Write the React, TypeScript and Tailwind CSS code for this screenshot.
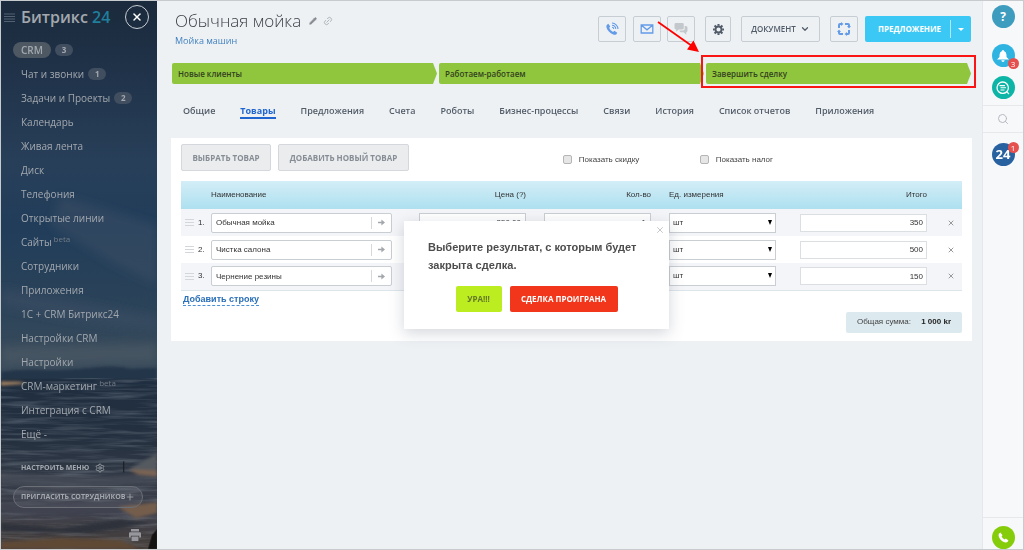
import React from 'react';
import { clsx } from 'clsx';
import { ChevronDown, Link2, Pencil, Plus, Search, Settings, X } from 'lucide-react';

interface MenuItem {
  name: string;
  count?: number;
  beta?: boolean;
  active?: boolean;
}

const menuItems: MenuItem[] = [
  { name: 'CRM', count: 3, active: true },
  { name: 'Чат и звонки', count: 1 },
  { name: 'Задачи и Проекты', count: 2 },
  { name: 'Календарь' },
  { name: 'Живая лента' },
  { name: 'Диск' },
  { name: 'Телефония' },
  { name: 'Открытые линии' },
  { name: 'Сайты', beta: true },
  { name: 'Сотрудники' },
  { name: 'Приложения' },
  { name: '1C + CRM Битрикс24' },
  { name: 'Настройки CRM' },
  { name: 'Настройки' },
  { name: 'CRM-маркетинг', beta: true },
  { name: 'Интеграция с CRM' },
];

const stages = ['Новые клиенты', 'Работаем-работаем', 'Завершить сделку'];

const tabs = [
  'Общие',
  'Товары',
  'Предложения',
  'Счета',
  'Роботы',
  'Бизнес-процессы',
  'Связи',
  'История',
  'Список отчетов',
  'Приложения',
];

const products = [
  { name: 'Обычная мойка', price: '350.00', qty: '1', total: '350' },
  { name: 'Чистка салона', price: '500.00', qty: '1', total: '500' },
  { name: 'Чернение резины', price: '150.00', qty: '1', total: '150' },
];

const SidebarPhoto = () => (
  <svg
    className="absolute inset-0 h-full w-full"
    viewBox="0 0 157 550"
    preserveAspectRatio="none"
    aria-hidden="true"
  >
    <defs>
      <linearGradient id="sky" x1="0" y1="0" x2="0" y2="1">
        <stop offset="0" stopColor="#1b2a3c" />
        <stop offset="0.2" stopColor="#20334a" />
        <stop offset="0.42" stopColor="#283f59" />
        <stop offset="0.6" stopColor="#213d5a" />
        <stop offset="0.8" stopColor="#2b4359" />
        <stop offset="1" stopColor="#3d4d5c" />
      </linearGradient>
      <linearGradient id="water" x1="0" y1="0" x2="0" y2="1">
        <stop offset="0" stopColor="#1f2e40" />
        <stop offset="0.35" stopColor="#24303f" />
        <stop offset="0.55" stopColor="#303845" />
        <stop offset="0.8" stopColor="#3f414c" />
        <stop offset="1" stopColor="#443c37" />
      </linearGradient>
      <filter id="soft" x="-20%" y="-50%" width="140%" height="200%">
        <feGaussianBlur stdDeviation="5" />
      </filter>
      <filter id="edge" x="-10%" y="-50%" width="120%" height="200%">
        <feGaussianBlur stdDeviation="1.5" />
      </filter>
      <filter id="waves" x="0" y="0" width="100%" height="100%">
        <feTurbulence type="fractalNoise" baseFrequency="0.02 0.28" numOctaves="3" seed="7" />
        <feColorMatrix values="0 0 0 0 0.42  0 0 0 0 0.47  0 0 0 0 0.53  1.8 0 0 0 -0.75" />
      </filter>
    </defs>
    <rect width="157" height="380" fill="url(#sky)" />
    <g filter="url(#soft)" fill="#3d5065">
      <path d="M60 195 L157 225 L157 285 L110 262 L50 225Z" opacity="0.5" />
      <path d="M0 288 L70 300 L157 318 L157 330 L60 318 L0 306Z" opacity="0.5" />
      <path d="M0 347 L157 344 L157 362 L0 364Z" fill="#4b5864" opacity="0.7" />
    </g>
    <path d="M0 372 Q20 369 42 370 T90 368 T130 369 L157 368 V382 H0Z" fill="#22344a" filter="url(#edge)" />
    <rect y="379" width="157" height="171" fill="url(#water)" />
    <rect y="379" width="157" height="171" filter="url(#waves)" opacity="0.35" />
    <g filter="url(#edge)">
      <path d="M0 382 L18 382 L26 384 L0 386Z" fill="#a5825f" />
      <path d="M0 473 L90 478 L157 474 L157 484 L60 490 L0 485Z" fill="#4a4e5a" opacity="0.7" />
      <path d="M130 469 L157 454 L157 471 L136 472Z" fill="#555a60" />
      <path d="M128 470 L157 471 L157 477 L138 475Z" fill="#7d6552" />
      <path d="M0 504 L70 506 L140 500 L120 514 L40 516 L0 512Z" fill="#3f434f" />
      <path d="M118 508 L157 503 L157 514 L136 519Z" fill="#755d4b" />
      <path d="M0 524 L60 529 L120 520 L150 524 L90 534 L0 532Z" fill="#2d313a" />
      <path d="M0 543 L60 539 L120 541 L140 550 L0 550Z" fill="#5e4836" />
    </g>
    <path d="M148 550 L152 536 L157 530 L157 550Z" fill="#141311" />
    <rect x="123" y="462" width="1" height="11" fill="#191c20" />
  </svg>
);

const Sidebar = () => (
  <aside className="relative flex w-[156px] shrink-0 flex-col overflow-hidden bg-[#1f3047] text-[10px] text-[#a3a8ae]">
    <SidebarPhoto />
    <div className="relative flex h-8 items-center pl-[3px]">
      <button aria-label="Меню" className="mr-1.5">
        <svg viewBox="0 0 11 9" className="h-[9px] w-[11px]" stroke="#536173" aria-hidden="true">
          <path d="M0 1 H11 M0 3.5 H11 M0 6 H11 M0 8.5 H11" />
        </svg>
      </button>
      <a href="#" className="text-[16px] leading-6 font-semibold whitespace-nowrap">
        Битрикс <span className="text-[#1f7f9d]">24</span>
      </a>
      <button
        aria-label="Закрыть"
        className="mr-2 ml-auto flex h-6 w-6 items-center justify-center rounded-full border border-[#c9ced4] text-white"
      >
        <X className="h-3 w-3" strokeWidth={3} />
      </button>
    </div>

    <nav className="relative mt-[5px] pl-3">
      {menuItems.map((item) => (
        <a key={item.name} href="#" className="flex h-6 items-center whitespace-nowrap">
          <span
            className={clsx('px-2 leading-4', item.active && 'rounded-full bg-[#4d5863] font-semibold')}
          >
            {item.name}
            {item.beta && <sup className="ml-0.5 text-[8px] text-[#737b84]">beta</sup>}
          </span>
          {item.count && (
            <span
              className={clsx(
                'h-3 w-[18px] rounded-full bg-[#414e5f] text-center text-[8px] leading-3 font-bold',
                item.active ? 'ml-1' : '-ml-1'
              )}
            >
              {item.count}
            </span>
          )}
        </a>
      ))}
      <button className="flex h-6 items-center px-2">Ещё -</button>
    </nav>

    <div className="relative mt-2.5 pl-3">
      <button className="flex h-6 items-center gap-1.5 px-2 text-[7px] font-bold whitespace-nowrap">
        НАСТРОИТЬ МЕНЮ <Settings className="h-2.5 w-2.5" />
      </button>
      <button className="mt-1.5 flex h-[22px] w-[130px] items-center justify-between rounded-full border border-[#6b6f76] bg-white/5 px-[7px] text-[7px] font-bold whitespace-nowrap">
        ПРИГЛАСИТЬ СОТРУДНИКОВ <Plus className="h-2.5 w-2.5 shrink-0" />
      </button>
    </div>
    <button aria-label="Печать" className="relative mt-auto mr-4 mb-2 self-end">
      <svg viewBox="0 0 12 12" className="h-3 w-3" fill="#96989d" aria-hidden="true">
        <path d="M2 0 H10 V2.5 H2Z M1 3.3 H11 Q12 3.3 12 4.3 V8.5 H10.2 V6.8 H1.8 V8.5 H0 V4.3 Q0 3.3 1 3.3Z M2.6 7.6 H9.4 V12 H2.6Z" />
      </svg>
    </button>
  </aside>
);

const toolButton = 'flex h-[26px] shrink-0 items-center justify-center rounded-xs border border-[#c6cdd3]';

const Header = () => (
  <header className="flex pt-3.5 pr-[11px] pl-[18px]">
    <div className="min-w-0 flex-1">
      <div className="-mt-1.5 flex items-center">
        <h1 className="text-[17px] leading-6 font-light whitespace-nowrap text-[#3d4148]">Обычная мойка</h1>
        <button aria-label="Изменить" className="ml-2 text-[#888d93]">
          <Pencil className="h-2 w-2" fill="currentColor" />
        </button>
        <button aria-label="Ссылка" className="ml-1.5 text-[#a8adb3]">
          <Link2 className="h-2.5 w-2.5 -rotate-45" />
        </button>
      </div>
      <a href="#" className="block text-[9px] leading-4 text-[#4281c0]">
        Мойка машин
      </a>
    </div>
    <div className="mt-px flex">
      <button aria-label="Позвонить" className={clsx(toolButton, 'w-7 text-[#649be8]')}>
        <svg viewBox="0 0 16 16" className="h-3.5 w-3.5" fill="none" stroke="currentColor">
          <path
            d="M3.8 2 L6 5.2 L4.8 6.7 C5.6 8.8 7.1 10.4 9.2 11.3 L10.7 10 L14 12.2 C13 14.6 11.5 15.1 9.4 14.3 C5.4 12.7 2.8 9.9 1.7 6.4 C1.2 4.3 2 2.8 3.8 2Z"
            fill="currentColor"
            stroke="none"
          />
          <path d="M8 1.2 A7 7 0 0 1 14.8 8 M8 3.7 A4.5 4.5 0 0 1 12.3 8 M8 6 A2 2 0 0 1 10 8" strokeWidth="1.2" />
        </svg>
      </button>
      <button aria-label="Письмо" className={clsx(toolButton, 'ml-[7px] w-7 text-[#649be8]')}>
        <svg viewBox="0 0 14 10" className="h-2.5 w-3.5" fill="none" stroke="currentColor" strokeWidth="1.3">
          <path d="M1.2 1 H12.8 V9 H1.2Z M1.2 1 L7 5.8 L12.8 1" />
        </svg>
      </button>
      <button aria-label="Чат" className={clsx(toolButton, 'ml-1.5 w-7 text-[#c3c8cc]')}>
        <svg viewBox="0 0 14 13" className="h-3 w-3.5" fill="currentColor">
          <path d="M1.5 0 H8.5 Q10 0 10 1.5 V5.5 Q10 7 8.5 7 H4.5 L1.8 9.4 V7 Q0 7 0 5.5 V1.5 Q0 0 1.5 0Z" />
          <path d="M11 3.2 H12.4 Q14 3.4 14 5 V8.5 Q14 10 12.7 10 V12.6 L9.8 10 H6.8 Q5.6 9.8 5.2 8.2 H9 Q11 8.2 11 6Z" />
        </svg>
      </button>
      <button aria-label="Настройки" className={clsx(toolButton, 'ml-2.5 w-[26px] text-[#525c69]')}>
        <svg viewBox="0 0 24 24" className="h-[11px] w-[11px]" fill="none" stroke="currentColor">
          <circle cx="12" cy="12" r="6.5" strokeWidth="4" />
          <path
            d="M12 0 V4 M12 20 V24 M0 12 H4 M20 12 H24 M3.5 3.5 L6.5 6.5 M17.5 17.5 L20.5 20.5 M20.5 3.5 L17.5 6.5 M6.5 17.5 L3.5 20.5"
            strokeWidth="4.5"
          />
        </svg>
      </button>
      <button className={clsx(toolButton, 'ml-2.5 w-[79px] gap-1 text-[8px] font-semibold text-[#525c69]')}>
        ДОКУМЕНТ <ChevronDown className="h-2.5 w-2.5" strokeWidth={3} />
      </button>
      <button aria-label="Развернуть" className={clsx(toolButton, 'ml-2.5 w-7 text-[#649be8]')}>
        <svg viewBox="0 0 14 14" className="h-3.5 w-3.5" fill="currentColor">
          <path d="M1 6 V3 Q1 1 3 1 H4 V3 H3 V6Z M4 0 L6.5 2 L4 4Z" />
          <path d="M8 1 H11 Q13 1 13 3 V4 H11 V3 H8Z M14 4 L12 6.5 L10 4Z" />
          <path d="M13 8 V11 Q13 13 11 13 H10 V11 H11 V8Z M10 14 L7.5 12 L10 10Z" />
          <path d="M6 13 H3 Q1 13 1 11 V10 H3 V11 H6Z M0 10 L2 7.5 L4 10Z" />
        </svg>
      </button>
      <div className="ml-[7px] flex h-[26px] w-[106px] items-center rounded-xs bg-[#3bc8f5] text-white">
        <button className="h-full flex-1 pl-1 text-[8px] font-bold">ПРЕДЛОЖЕНИЕ</button>
        <button
          aria-label="Ещё"
          className="flex h-[18px] w-[21px] items-center justify-center border-l border-white/60"
        >
          <svg viewBox="0 0 6 3" className="h-[3px] w-1.5" fill="currentColor">
            <path d="M0 0 H6 L3 3Z" />
          </svg>
        </button>
      </div>
    </div>
  </header>
);

const StageBar = () => (
  <div className="mt-3.5 flex gap-0.5 pr-[11px] pl-[15px]">
    {stages.map((stage, index) => (
      <div key={stage} className="relative flex-1">
        <button className="block h-[21px] w-full rounded-l-xs bg-[#8fc63d] px-1.5 text-left text-[8px] font-semibold text-[#34411f] [clip-path:polygon(0_0,calc(100%-4px)_0,100%_50%,calc(100%-4px)_100%,0_100%)]">
          {stage}
        </button>
        {index === stages.length - 1 && (
          <div className="pointer-events-none absolute -inset-x-[5px] -top-2 -bottom-1 border-2 border-[#fb1414]">
            <svg
              className="absolute -top-9 -left-[47px] h-9 w-12"
              viewBox="0 0 48 36"
              fill="#ff0000"
              aria-hidden="true"
            >
              <path d="M2 1 L36 25" stroke="#ff0000" strokeWidth="1.8" />
              <path d="M43 31 L31 28.5 L37.5 19.5Z" />
            </svg>
          </div>
        )}
      </div>
    ))}
  </div>
);

const Tabs = () => (
  <nav className="mt-4 flex gap-[25px] pl-[26px] text-[9px] font-semibold whitespace-nowrap text-[#535d69]">
    {tabs.map((tab) => (
      <a
        key={tab}
        href="#"
        className={clsx(
          'h-[19px] border-b-2 leading-[22px]',
          tab === 'Товары' ? 'border-[#1f66d0] font-bold text-[#1f66d0]' : 'border-transparent'
        )}
      >
        {tab}
      </a>
    ))}
  </nav>
);

const field = 'h-5 border border-[#c9ced2] bg-white text-[8px] text-[#333]';

const ProductTable = () => (
  <table className="mt-2.5 w-full table-fixed border-b border-[#dce5ea] text-[8px] text-[#333]">
    <colgroup>
      <col className="w-[30px]" />
      <col />
      <col className="w-[125px]" />
      <col className="w-[125px]" />
      <col className="w-[131px]" />
      <col className="w-[127px]" />
      <col className="w-[35px]" />
    </colgroup>
    <thead>
      <tr className="h-7 bg-linear-to-b from-[#d3eef7] to-[#ade0f0] [&>th]:font-normal">
        <th />
        <th className="text-left">Наименование</th>
        <th className="pr-[18px] text-right">Цена (?)</th>
        <th className="pr-[18px] text-right">Кол-во</th>
        <th className="text-left">Ед. измерения</th>
        <th className="text-right">Итого</th>
        <th />
      </tr>
    </thead>
    <tbody>
      {products.map((product, index) => (
        <tr key={product.name} className="h-[27px] odd:bg-[#f4f5f8]">
          <td>
            <div className="flex items-center gap-1 pl-1">
              <svg viewBox="0 0 9 7" className="h-[7px] w-[9px] shrink-0" stroke="#d3d6da">
                <path d="M0 .5 H9 M0 3.5 H9 M0 6.5 H9" />
              </svg>
              {index + 1}.
            </div>
          </td>
          <td className="pr-[27px]">
            <div className="flex h-5 items-center rounded-xs border border-[#c9ced2] bg-white">
              <input
                aria-label="Наименование"
                defaultValue={product.name}
                className="h-full min-w-0 flex-1 bg-transparent px-1 text-[8px]"
              />
              <button
                aria-label="Открыть товар"
                className="flex h-3 w-5 items-center justify-center border-l border-[#d5d9dc]"
              >
                <svg viewBox="0 0 7 7" className="h-[7px] w-[7px]" fill="#a3a7ab">
                  <path d="M0 2.7 H3.4 V0.4 L7 3.5 L3.4 6.6 V4.3 H0Z" />
                </svg>
              </button>
            </div>
          </td>
          <td className="pr-[18px]">
            <input aria-label="Цена" defaultValue={product.price} className={clsx(field, 'block w-full px-1 text-right')} />
          </td>
          <td className="pr-[18px]">
            <input aria-label="Количество" defaultValue={product.qty} className={clsx(field, 'block w-full px-1 text-right')} />
          </td>
          <td className="pr-6">
            <div className="relative">
              <select aria-label="Единица измерения" className={clsx(field, 'block w-full appearance-none px-[3px]')}>
                <option>шт</option>
              </select>
              <svg viewBox="0 0 4 5" className="pointer-events-none absolute top-[7px] right-1 h-[5px] w-1">
                <path d="M0 0 H4 L2 5Z" />
              </svg>
            </div>
          </td>
          <td>
            <input
              aria-label="Итого"
              defaultValue={product.total}
              className="block h-[18px] w-full border border-[#dcdfe2] bg-white px-[3px] text-right text-[8px]"
            />
          </td>
          <td className="pl-5">
            <button aria-label="Удалить" className="flex text-[#999]">
              <X className="h-2 w-2" strokeWidth={3} />
            </button>
          </td>
        </tr>
      ))}
    </tbody>
  </table>
);

const grayButton =
  "h-[27px] shrink-0 rounded-xs border border-[#d4d7db] bg-[#ebecee] [font-family:'Open_Sans',sans-serif] text-[8px] font-bold text-[#868d95]";

const checkbox = 'h-[9px] w-[9px] appearance-none rounded-xs border border-[#b5b5b5] bg-[#e6e6e6]';

const Products = () => (
  <section className="mt-[19px] mr-[10px] ml-3.5 bg-white px-[10px] pt-1.5 pb-2 [font-family:'Liberation_Sans',sans-serif] text-[8px] text-[#444]">
    <div className="flex items-center">
      <button className={clsx(grayButton, 'w-[90px]')}>ВЫБРАТЬ ТОВАР</button>
      <button className={clsx(grayButton, 'ml-[7px] w-[131px]')}>ДОБАВИТЬ НОВЫЙ ТОВАР</button>
      <div className="ml-auto flex pt-1 pr-[189px]">
        <label className="flex w-[137px] items-center gap-[7px]">
          <input type="checkbox" className={checkbox} />
          Показать скидку
        </label>
        <label className="flex items-center gap-[7px]">
          <input type="checkbox" className={checkbox} />
          Показать налог
        </label>
      </div>
    </div>
    <ProductTable />
    <button className="mt-0.5 ml-0.5 block h-[13px] border-b border-dashed border-[#4b8fd6] text-[9px] leading-3 font-bold text-[#2a6fb8]">
      Добавить строку
    </button>
    <div className="mt-1.5 ml-auto flex h-[21px] w-[116px] items-center justify-between rounded-xs bg-[#dce9ef] px-[11px] whitespace-nowrap">
      <span>Общая сумма:</span>
      <strong className="text-[#222]">1 000 kr</strong>
    </div>
  </section>
);

const ResultDialog = () => (
  <div
    role="dialog"
    aria-labelledby="result-title"
    className="absolute top-[220px] left-[247px] w-[265px] bg-white px-6 py-[17px] shadow-[0_4px_14px_rgba(80,90,110,0.25)]"
  >
    <button aria-label="Закрыть" className="absolute top-1 right-1 text-[#b9bdc1]">
      <X className="h-2.5 w-2.5" />
    </button>
    <h2
      id="result-title"
      className="[font-family:'Liberation_Sans',sans-serif] text-[11px] leading-[18px] font-bold text-[#4d4d4d]"
    >
      Выберите результат, с которым будет закрыта сделка.
    </h2>
    <div className="mt-3 flex justify-center gap-2 text-[8px] font-bold">
      <button className="h-[26px] w-[46px] rounded-xs bg-[#bbed21] text-[#65782a]">УРА!!!</button>
      <button className="h-[26px] w-[108px] rounded-xs bg-[#f1361b] text-white">СДЕЛКА ПРОИГРАНА</button>
    </div>
  </div>
);

const railCircle = 'relative flex h-[23px] w-[23px] items-center justify-center rounded-full text-white';
const railBadge =
  'absolute flex h-[11px] w-[11px] items-center justify-center rounded-full bg-[#e5504f] text-[8px] leading-none';

const Rail = () => (
  <aside className="flex w-[41px] shrink-0 flex-col items-center border-l border-[#e4e8eb] bg-[#f7f8fa] pt-1">
    <button aria-label="Помощь" className={clsx(railCircle, 'bg-[#3e9cbf] text-[12px] font-bold')}>
      ?
    </button>
    <button aria-label="Уведомления" className={clsx(railCircle, 'mt-4 bg-[#2fb4e2]')}>
      <svg viewBox="0 0 12 12" className="h-3 w-3" fill="currentColor">
        <path d="M5 1 Q5 0 6 0 Q7 0 7 1 Q9.5 2 9.5 5 V7 L12 9.5 H0 L2.5 7 V5 Q2.5 2 5 1Z M4.3 10.3 H7.7 Q7.4 12 6 12 Q4.6 12 4.3 10.3Z" />
      </svg>
      <span className={clsx(railBadge, '-right-1 -bottom-0.5')}>3</span>
    </button>
    <button aria-label="Сообщения" className={clsx(railCircle, 'mt-[9px] bg-[#0cb5a5]')}>
      <svg viewBox="0 0 14 14" className="h-3.5 w-3.5" fill="none" stroke="currentColor" strokeWidth="1.3">
        <circle cx="6.7" cy="6.7" r="5.7" />
        <path d="M3.5 4.6 H9 M4.5 6.8 H10 M4.5 9 H8.5 M10.5 10.5 L13 13" strokeWidth="1.1" />
      </svg>
    </button>
    <div className="mt-1.5 flex h-7 w-full items-center justify-center border-y border-[#e6e9ec] text-[#b5babf]">
      <button aria-label="Поиск">
        <Search className="h-3 w-3" />
      </button>
    </div>
    <button aria-label="Битрикс24" className={clsx(railCircle, 'mt-2.5 bg-[#28619f] text-[13px] font-bold')}>
      24
      <span className={clsx(railBadge, '-top-px -right-1 font-normal')}>1</span>
    </button>
    <div className="mt-auto flex h-8 w-full items-end justify-center border-t border-[#e6e9ec]">
      <button aria-label="Телефон" className={clsx(railCircle, 'bg-[#85cc0a]')}>
        <svg viewBox="0 0 12 12" className="h-[11px] w-[11px]" fill="currentColor">
          <path d="M2.6 .6 L4.9 3.5 L3.9 4.9 Q5 7 7.2 8.1 L8.6 7.1 L11.4 9.4 Q10.4 12 7.8 11.4 Q2 9.8 .6 4.2 Q.2 1.4 2.6 .6Z" />
        </svg>
      </button>
    </div>
  </aside>
);

const App: React.FC = () => {
  return (
    <div className="flex min-h-screen border border-[#c8cbce] bg-[#edf1f4] [font-family:'Open_Sans',sans-serif]">
      <Sidebar />
      <main className="relative min-w-0 flex-1">
        <Header />
        <StageBar />
        <Tabs />
        <Products />
        <ResultDialog />
      </main>
      <Rail />
    </div>
  );
};

export default App;
